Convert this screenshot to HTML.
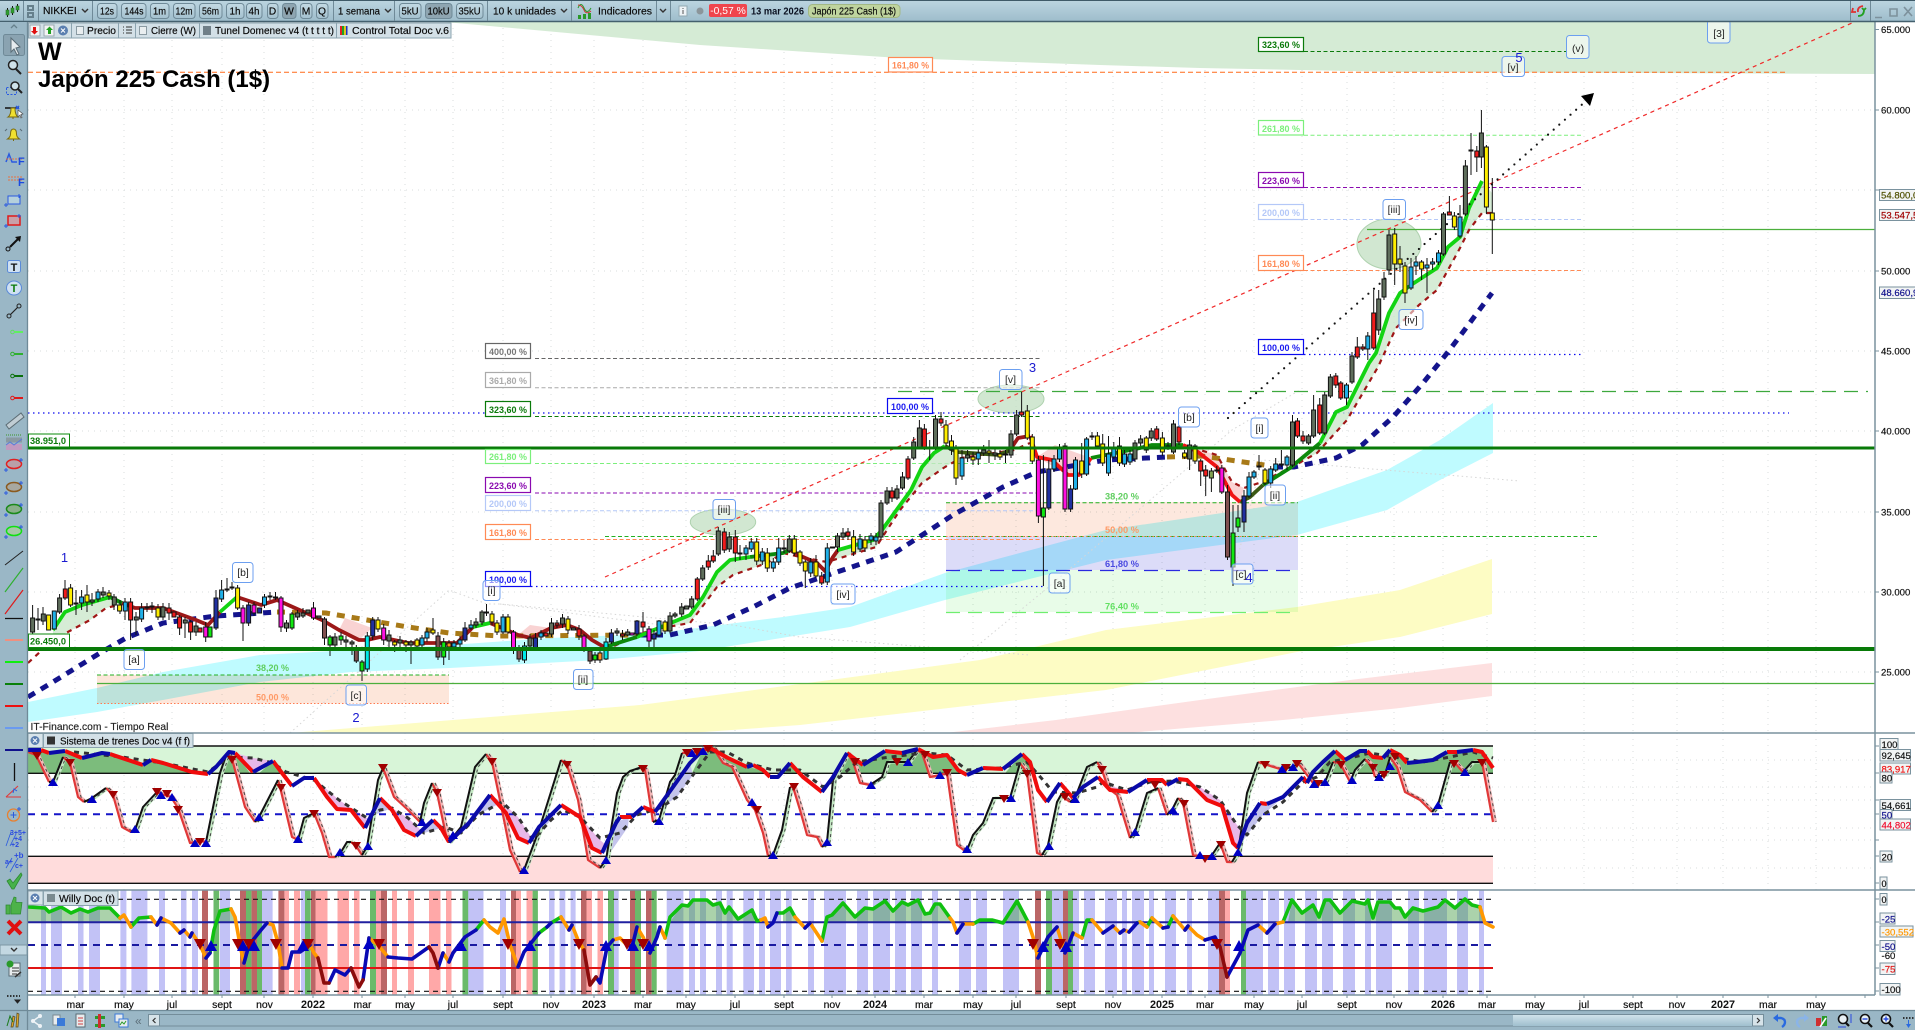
<!DOCTYPE html>
<html lang="es"><head><meta charset="utf-8"><title>Japón 225 Cash</title>
<style>
html,body{margin:0;padding:0;background:#fff;width:1915px;height:1030px;overflow:hidden}
svg{display:block;position:absolute;left:0;top:0}
text{font-family:"Liberation Sans",sans-serif}
.t{font-size:10.3px;fill:#0a0a0a;stroke:#0a0a0a;stroke-width:.18}
.m{text-anchor:middle}
.a{font-size:9.6px;fill:#111;stroke:#111;stroke-width:.18}
.x{font-size:10.4px;fill:#111;text-anchor:middle;stroke:#111;stroke-width:.2}
.y{font-size:10.8px;font-weight:bold;fill:#111;text-anchor:middle}
.f{font-size:9.6px;font-weight:bold;text-anchor:middle}
.w{font-size:10.4px;fill:#222;text-anchor:middle}
.n{font-size:13px;fill:#1a1ad0;text-anchor:middle}
.wb{fill:#fff;fill-opacity:.55;stroke:#6c9ff0;stroke-width:1}
.bx{fill:#f2f4f4;stroke:#7a929e;stroke-width:1}
.c path{stroke:#111;stroke-width:1}
</style></head><body>
<svg width="1915" height="1030" viewBox="0 0 1915 1030" xmlns="http://www.w3.org/2000/svg">
<defs>
<linearGradient id="tb" x1="0" y1="0" x2="0" y2="1"><stop offset="0" stop-color="#bcd5e0"/><stop offset="1" stop-color="#9dbccb"/></linearGradient>
<linearGradient id="bt" x1="0" y1="0" x2="0" y2="1"><stop offset="0" stop-color="#c3dae4"/><stop offset="1" stop-color="#a4c1cf"/></linearGradient>
<linearGradient id="sb" x1="0" y1="0" x2="0" y2="1"><stop offset="0" stop-color="#cfe2ea"/><stop offset="1" stop-color="#a0bfce"/></linearGradient>
<path id="fr" d="M28 752L36 755L49 782M63 757L70 763L78 797L84 802M106 788L113 795L122 827L131 832M157 792L161 794L171 797L178 808L190 843L200 841L206 842M227 753L232 759L245 807L255 822M278 780L280 787L292 837L298 840M314 813L322 833L329 857L335 857M351 842L356 846L362 855M383 768L394 797L408 810L420 822M432 783L437 793L447 840M486 754L492 762L502 810L510 850L520 872M561 760L567 765L578 800L588 860L600 868M642 767L645 770L653 822M682 753L686 753L697 752L700 752M713 748L723 763L732 767L747 800L755 810L763 833L768 856M790 787L793 787L800 810L807 835L817 837L822 847M847 753L853 762L860 783L870 785M917 750L922 753L930 777L940 775L947 773L957 845L965 851M1020 763L1027 773L1037 853L1042 855M1062 793L1063 797L1070 802M1097 762L1102 770L1108 788L1117 795L1130 838M1158 788L1167 815M1178 798L1183 803L1193 855L1205 858M1220 843L1227 862L1232 862M1258 762L1267 765L1280 769M1298 763L1313 783L1318 783M1333 762L1340 763L1350 782M1365 759L1372 767L1375 777M1390 757L1397 767L1405 792L1420 800L1432 812M1450 762L1455 763L1463 772M1482 762L1493 822"/>
<path id="fb" d="M49 782L53 782L63 757M84 802L92 798L106 788M131 832L135 830L143 807L157 792M206 842L220 773L227 753M255 822L259 817L278 780M298 840L304 818L314 813M335 857L341 852L347 842L351 842M362 855L367 847L378 780L383 768M420 822L424 803L432 783M447 840L449 842L461 827L475 767L486 754M520 872L524 870L539 830L561 760M600 868L606 860L617 793L623 777L630 771L642 767M653 822L659 820L670 782L675 775L682 753M700 752L702 750L713 748M768 856L773 855L782 830L790 787M822 847L827 842L833 780L847 753M870 785L882 777L887 762L897 762L908 762L917 750M965 851L967 850L973 835L983 823L993 798L1003 798L1010 798L1020 763M1042 855L1048 845L1057 802L1062 793M1070 802L1075 798L1087 767L1097 762M1130 838L1135 832L1147 793L1158 788M1167 815L1173 808L1178 798M1205 858L1212 855L1220 843M1232 862L1238 852L1247 793L1258 762M1280 769L1293 767L1298 763M1318 783L1325 782L1333 762M1350 782L1355 770L1365 759M1375 777L1378 777L1385 775L1390 757M1432 812L1438 805L1450 762M1463 772L1472 762L1482 762"/>
</defs>
<rect width="1915" height="1030" fill="#fff"/>

<!-- grid -->
<path stroke="#d9dedd" stroke-dasharray="1 5" fill="none" d="M28 110H1875M28 190H1875M28 271H1875M28 351H1875M28 431H1875M28 512H1875M28 592H1875M28 672H1875M28 760H1875M28 787H1875M28 800H1875M28 828H1875M28 840H1875M28 868H1875M28 911H1875M28 935H1875M28 956H1875M28 980H1875M75 22V995M124 22V995M172 22V995M222 22V995M264 22V995M313 22V995M362 22V995M405 22V995M453 22V995M503 22V995M551 22V995M594 22V995M643 22V995M686 22V995M735 22V995M784 22V995M832 22V995M875 22V995M924 22V995M973 22V995M1016 22V995M1066 22V995M1113 22V995M1162 22V995M1205 22V995M1254 22V995M1302 22V995M1347 22V995M1394 22V995M1443 22V995M1487 22V995M1535 22V995M1584 22V995M1633 22V995M1677 22V995M1723 22V995M1768 22V995M1816 22V995"/>

<!-- bands -->
<path fill="#d5ebd5" d="M445 22L700 45L900 58L1100 65L1200 68L1400 72L1875 74V22Z"/>
<path fill="#fde0e0" d="M945 733L1056 720L1200 700L1350 680L1492 663V696L1400 708L1283 720L1127 733Z"/>
<path fill="#fdfcc4" d="M290 733L640 705L800 684L980 660L1106 630L1297 607L1400 590L1492 559V614L1400 637L1297 652L1106 690L800 725L690 733Z"/>
<path fill="#bffbff" d="M28 702L97 688L163 672L260 655L351 650L450 645L550 638L650 634L783 617L850 607L945 573L1106 530L1297 502L1387 470L1440 440L1493 403V453L1440 480L1387 510L1297 535L1106 560L945 600L850 627L700 651L600 660L450 668L351 672L260 682L163 700L97 712L28 722Z"/>
<g style="mix-blend-mode:multiply">
<rect x="946" y="502" width="352" height="34.500" fill="#fde8de"/>
<rect x="946" y="536.500" width="352" height="33.500" fill="#dcdcf8"/>
<rect x="946" y="570" width="352" height="42" fill="#e8fce8"/>
<rect x="97" y="675" width="352" height="28.500" fill="#fde6da"/>
</g>

<!-- faint wave lines -->
<path fill="none" stroke="#d6d6d6" stroke-dasharray="1.500 3" d="M290 733L449 590L487 604L500 604L733 625L800 637L1030 655M960 660L1045 590L1232 430L1300 390M1232 580L1262 460L1520 481M500 604L700 630"/>

<!-- ellipses -->
<ellipse cx="723" cy="522" rx="32.700" ry="13" fill="#c2dfc2" fill-opacity=".75" stroke="#afd2af"/>
<ellipse cx="1011" cy="399" rx="33" ry="14" fill="#c2dfc2" fill-opacity=".75" stroke="#afd2af"/>
<ellipse cx="1389" cy="244" rx="32" ry="25" fill="#c2dfc2" fill-opacity=".75" stroke="#afd2af"/>

<!-- horizontal fib lines -->
<g fill="none">
<path stroke="#ff6a1a" stroke-dasharray="5 3" d="M28 72.300H1788"/>
<path stroke="#0a0af0" stroke-width="1.200" stroke-dasharray="1.500 3.500" d="M28 413H1789M531 586.500H1044M1304 354.500H1584"/>
<path stroke="#4caf3c" stroke-width="1.200" d="M97 683.500H1875M1367 229.500H1875"/>
<path stroke="#3da83d" stroke-width="1.200" stroke-dasharray="14 8" d="M898 391.500H1868"/>
<path stroke="#666" stroke-dasharray="4 2.500" d="M535 358.500H1042"/>
<path stroke="#aaa" stroke-dasharray="4 2.500" d="M535 387.700H1042"/>
<path stroke="#0a7a0a" stroke-dasharray="4 2.500" d="M535 416.500H1042M1304 51.500H1567"/>
<path stroke="#7bef7b" stroke-dasharray="4 2.500" d="M535 463.500H1042M1304 135.300H1583"/>
<path stroke="#8a0ab0" stroke-dasharray="4 2.500" d="M535 493H1042M1304 187.500H1583"/>
<path stroke="#b4c8f8" stroke-dasharray="4 2.500" d="M535 510.700H1042M1304 219.500H1583"/>
<path stroke="#ff8a55" stroke-dasharray="4 2.500" d="M535 539.500H1042M1304 270.500H1583"/>
<path stroke="#22b022" stroke-dasharray="4 2.500" d="M605 536.500H1598M946 502.700H1298M97 675H449"/>
<path stroke="#ff7a50" stroke-dasharray="1.500 2" d="M946 536.500H1298M97 703.500H449"/>
<path stroke="#2a2ae0" stroke-width="1.200" stroke-dasharray="14 8" d="M946 570.500H1298"/>
<path stroke="#6fee6f" stroke-width="1.200" stroke-dasharray="14 8" d="M946 612.500H1298"/>
<path stroke="#f02a2a" stroke-width="1.200" stroke-dasharray="4 4" d="M605 577L1852 23"/>
</g>

<!-- moving average fills -->
<path fill="#c8e6c8" fill-opacity=".75" d="M53 630L65 612L82 605L110 597L122 603L127 603L106 608L90 620L53 640ZM637 637L690 615L703 597L717 572L730 560L783 553L767 563L733 575L717 587L690 623L650 630ZM823 568L838 550L873 540L882 530L911 490L922 467L934 453L945 446L957 452L961 458L945 467L922 483L900 510L876 547L827 562ZM1290 468L1320 443L1336 412L1347 407L1369 363L1376 353L1389 313L1400 293L1414 283L1437 268L1448 247L1460 237L1469 208L1482 181L1492 193V213H1482L1469 230L1460 248L1437 290L1419 305L1396 328L1378 367L1347 420L1317 453Z"/>
<path fill="#f8c8c8" fill-opacity=".8" d="M1198 452L1217 467L1232 495L1240 502L1244 488L1232 482L1217 455L1183 445ZM1037 457L1068 475L1079 475L1091 458L1055 445ZM339 630L359 640L372 628L345 618ZM518 635L531 638L551 628L530 625Z"/>

<!-- long MA -->
<g fill="none" stroke-width="5">
<path stroke="#14148c" stroke-dasharray="8 7" d="M28 697L53 682L100 653L126 638L163 623L216 616L277 612M640 635L670 635L713 625L753 607L790 588L843 570L896 552L953 515L1003 487L1037 472L1106 460L1167 457M1275 467L1294 467L1336 458L1362 445L1393 417L1423 383L1448 352L1466 328L1483 305L1492 293"/>
<path stroke="#a87a18" stroke-dasharray="8 7" d="M277 612L326 613L408 627L449 633L500 636L640 635M1167 457L1202 456L1271 466"/>
</g>
<!-- thin dashed MA -->
<path fill="none" stroke="#a01616" stroke-width="2.200" stroke-dasharray="5 5" d="M28 663L53 640L90 620L106 608L127 603M605 650L650 630L690 623L717 587L733 575L767 563L783 553L800 557L827 562L876 547L900 510L922 483L945 467L961 458L1014 450L1030 443M1183 445L1217 455L1232 482L1244 488L1259 483L1290 468L1317 453L1347 420L1378 367L1396 328L1419 305L1437 290L1460 248L1469 230L1482 213L1492 213"/>
<!-- thick MA -->
<g fill="none" stroke-width="3.800" stroke-linejoin="round">
<path stroke="#0c8a0c" d="M110 597L122 603M605 647L637 637M750 557L783 553L790 550M1263 485L1290 468L1320 443M1091 458L1140 448L1152 445L1183 445"/>
<path stroke="#3c5a14" d="M945 446L957 452L999 455L1010 450M1240 502L1250 497L1263 485"/>
<path stroke="#9c1818" d="M122 603L135 608L163 608L196 620L208 625L220 612M237 597L261 605L277 600L322 620L339 630L359 640L367 640L380 637L408 643L433 643L457 643L473 627M490 623L502 628L518 635L531 638L551 628L567 625L580 630L592 640L604 647M790 550L803 557L817 563L825 571L833 557L838 550M1010 450L1018 438L1030 436"/>
<path stroke="#f01414" d="M1030 436L1037 457L1052 460L1068 475L1079 475L1091 458M1183 445L1198 452L1217 467L1232 495L1240 502"/>
<path stroke="#12d412" d="M53 630L65 612L82 605L110 597M220 612L237 597M473 627L490 623M637 637L690 615L703 597L717 572L730 560L750 557M838 550L873 540L882 530L911 490L922 467L934 453L945 446M1320 443L1336 412L1347 407L1369 363L1376 353L1389 313L1400 293L1414 283L1437 268L1448 247L1460 237L1469 208L1482 181"/>
</g>

<!-- dotted arrow -->
<path fill="none" stroke="#111" stroke-width="2.200" stroke-linecap="round" stroke-dasharray="0 7.500" d="M1228 418L1586 101"/>
<path fill="#000" d="M1594 93L1581 96L1590 106Z"/>

<!-- wicks -->
<path fill="none" stroke="#111" stroke-width="1" d="M32.600 605V637M38 608V630M43 607V625M59.600 594V614M65 580V600M70.600 584V607M76 590V615M81.600 590V610M87 585V612M92 593V606M98 589V602M103 587V598M109 590V600M114 594V610M120 600V614M125 598V620M130.600 598V640M136 612V635M141.600 603V622M147 603V612M152 602V613M158 604V620M163 603V620M169 603V620M179.600 615V635M185 617V638M190.600 620V640M196 622V636M205.700 622V642M216 590V630M221.600 580V602M227 578V592M232 582V590M237.600 585V610M243 605V641M248.600 602V626M254 602V616M264.500 594V608M270 592V600M275.500 592V600M281 596V632M286.500 620V632M292 612V630M297.600 610V620M303 608V618M313.500 602V620M324.500 617V645M330 635V656M335 633V648M341 632V645M346 636V650M352 640V655M356.300 645V663M362 660V681M367.300 632V672M372.700 617V640M378 617V632M383.700 624V645M389 630V647M394.700 640V652M400 636V650M406 640V652M411 640V664M417 638V650M422 635V648M427 628V642M433 618V635M438 632V660M443.700 638V665M449 640V660M454 640V650M460 636V648M465 622V642M471 620V630M476 618V628M482 610V625M486.500 604V616M492 611V625M497 620V635M503 614V634M508 614V634M513.500 630V654M519 645V662M524.500 642V663M530 634V648M535.500 633V650M541 630V640M551.500 618V637M557 620V628M562.500 614V628M568 616V634M579 625V640M584 634V652M590 650V664M595 652V663M600 650V663M606 638V660M611.400 629V644M617 628V636M622.500 630V640M627.700 629V636M637 620V636M643 612V632M649 626V648M654 630V647M659 620V637M665 620V634M670 612V633M675 612V618M681.700 603V617M691.700 596V609M697.300 577V601M702.700 565V581M708.300 555V570M713.300 550V563M718.300 527V556M724.300 528V553M729.300 532V552M735.300 530V562M740 545V560M746 545V560M751.300 538V552M756.700 538V565M762.300 548V565M767.300 548V572M773.300 558V572M778.700 538V565M784 540V553M789.300 535V553M794.300 535V556M800 550V566M805.300 560V588M810.700 558V577M816 555V578M821.700 572V585M827.300 543V585M837.500 533V552M843 528V540M848 528V540M853.600 530V556M860 534V552M865 536V552M871 533V545M876 533V545M881 500V540M887 487V505M892 487V502M897 485V500M902.500 472V490M908 456V480M913.700 437V460M919.400 420V449M924.400 424V450M929.700 440V460M935.500 415V450M941 412V426M946 420V446M951.500 435V455M956 445V485M962 450V480M967.600 450V462M973 452V465M978.300 449V465M983.700 445V456M989 440V463M995 449V460M1000 450V460M1005.500 450V463M1011 430V458M1016.600 410V436M1021.600 392V417M1027.300 405V440M1032.300 434V464M1038.400 456V523M1043.400 455V586M1048.800 460V510M1054 455V472M1059.500 444V462M1065 443V512M1070.600 485V512M1075.500 457V490M1081.700 443V478M1086.600 437V476M1092 432V440M1097.400 432V448M1102.700 434V466M1108.500 436V476M1113.800 442V459M1119.500 437V466M1124.500 450V467M1130 450V465M1135 440V462M1140.600 435V446M1146.300 436V453M1151.300 428V441M1156.700 426V441M1162.400 432V456M1168 442V450M1173.500 420V454M1179 425V445M1184.600 450V459M1189.600 440V470M1195 444V464M1200.700 459V486M1205.700 465V496M1211.400 468V492M1216.800 466V473M1221.800 465V494M1227.500 485V560M1233 505V586M1238 505V532M1244 490V532M1249 472V498M1254 470V479M1259 455V470M1265 468V485M1270.700 466V488M1275.700 458V472M1281.400 450V467M1287 455V470M1292.500 415V467M1297.500 418V438M1303 431V444M1308.600 434V445M1313.600 395V438M1319.700 398V435M1324.700 392V435M1330.400 374V398M1335.800 373V388M1340.800 381V400M1346.500 383V405M1352 352V384M1357.300 337V359M1362.800 344V351M1367.800 332V360M1373.700 290V350M1378.700 290V335M1384 272V300M1389 230V275M1394.700 228V285M1400 246V272M1405 262V303M1411 258V290M1416 256V275M1421.600 260V280M1427 258V293M1432.600 258V270M1438.500 250V265M1443.500 212V256M1449.400 196V215M1454.400 212V230M1460 205V238M1465.400 160V216M1471 133V175M1476.800 146V172M1481.400 110V168M1486.400 145V214M1492.300 178V254"/>

<!-- candle bodies -->
<g class="c">
<path fill="#5f6e5c" d="M30.600 618h4v14h-4zM36 619h4v1h-4zM41.300 614h4v7h-4zM57.600 598h4v14h-4zM74 603h4v1h-4zM90.200 600h4v2h-4zM101.300 592h4v3h-4zM112.300 597h4v8h-4zM134.300 617h4v3h-4zM145 607h4v1h-4zM150 606h4v1h-4zM161 607h4v10h-4zM183.300 620h4v3h-4zM194 626h4v6h-4zM225 589h4v1h-4zM230 587h4v1h-4zM268 596h4v1h-4zM284.500 623h4v5h-4zM295.600 613h4v4h-4zM301 613h4v3h-4zM306 610h4v3h-4zM317 616h4v2h-4zM333 637h4v8h-4zM344 640h4v2h-4zM350 642h4v2h-4zM387 635h4v6h-4zM398 640h4v3h-4zM409 642h4v3h-4zM474 622h4v3h-4zM480 612h4v10h-4zM484.500 612h4v1h-4zM528 638h4v8h-4zM549.500 623h4v11h-4zM560.500 618h4v6h-4zM571.500 628h4v2h-4zM615 631h4v2h-4zM625.700 632h4v3h-4zM668 616h4v15h-4zM673 614h4v2h-4zM679.700 607h4v7h-4zM684.700 606h4v3h-4zM689.700 599h4v8h-4zM700.700 568h4v11h-4zM716.300 531h4v23h-4zM727.300 537h4v12h-4zM738 553h4v1h-4zM782 548h4v1h-4zM787.300 539h4v12h-4zM830.500 547h4v1h-4zM835.500 536h4v11h-4zM841 533h4v4h-4zM879 503h4v34h-4zM885 491h4v12h-4zM895 489h4v9h-4zM900.500 477h4v11h-4zM911.700 442h4v16h-4zM917.400 428h4v19h-4zM933.500 419h4v29h-4zM965.600 455h4v3h-4zM981.700 450h4v3h-4zM993 453h4v2h-4zM1003.500 454h4v1h-4zM1009 434h4v21h-4zM1014.600 415h4v19h-4zM1133 443h4v16h-4zM1138.600 439h4v4h-4zM1149.300 431h4v7h-4zM1166 446h4v1h-4zM1171.500 424h4v28h-4zM1187.600 445h4v14h-4zM1214.800 470h4v1h-4zM1279.400 464h4v1h-4zM1290.500 422h4v43h-4zM1306.600 436h4v7h-4zM1311.600 410h4v26h-4zM1322.700 395h4v38h-4zM1328.400 377h4v19h-4zM1350 356h4v26h-4zM1376.700 299h4v31h-4zM1382 279h4v18h-4zM1387 235h4v35h-4zM1441.500 214h4v40h-4zM1463.400 166h4v48h-4zM1469 150h4v1h-4zM1479.400 133h4v24h-4z"/>
<path fill="#ffee00" d="M46.600 615h4v15h-4zM68.600 588h4v17h-4zM85 595h4v7h-4zM107 593h4v3h-4zM117.600 605h4v6h-4zM156 608h4v9h-4zM235.600 588h4v20h-4zM273.500 597h4v1h-4zM376 620h4v9h-4zM392.700 642h4v3h-4zM404 642h4v3h-4zM415 640h4v6h-4zM431 630h4v3h-4zM490 614h4v8h-4zM495 623h4v9h-4zM506 617h4v15h-4zM566 619h4v11h-4zM663 622h4v9h-4zM754.700 542h4v19h-4zM765.300 553h4v15h-4zM792.300 539h4v14h-4zM798 552h4v11h-4zM803.300 562h4v9h-4zM814 562h4v14h-4zM851.600 537h4v15h-4zM863 540h4v8h-4zM927.700 447h4v2h-4zM944 425h4v18h-4zM949.500 441h4v9h-4zM954 449h4v29h-4zM971 457h4v3h-4zM987 451h4v2h-4zM998 454h4v3h-4zM1025.300 411h4v27h-4zM1030.300 437h4v24h-4zM1079.700 461h4v13h-4zM1090 436h4v1h-4zM1095.400 436h4v10h-4zM1100.700 444h4v19h-4zM1117.500 446h4v17h-4zM1144.300 438h4v12h-4zM1160.400 438h4v14h-4zM1182.600 453h4v4h-4zM1193 446h4v15h-4zM1263 470h4v13h-4zM1392.700 234h4v30h-4zM1398 259h4v5h-4zM1403 266h4v27h-4zM1419.600 262h4v7h-4zM1452.400 216h4v11h-4zM1484.400 147h4v60h-4zM1490.300 213h4v7h-4z"/>
<path fill="#20b0e8" d="M52.300 611h4v18h-4zM79.600 597h4v6h-4zM96 592h4v7h-4zM123.300 602h4v9h-4zM139.600 608h4v11h-4zM219.600 590h4v9h-4zM262.500 597h4v8h-4zM420 638h4v7h-4zM425 632h4v6h-4zM452 643h4v4h-4zM458 640h4v4h-4zM469 625h4v3h-4zM501 617h4v15h-4zM539 633h4v4h-4zM657 621h4v14h-4zM744 548h4v6h-4zM749.300 542h4v7h-4zM760.300 552h4v9h-4zM771.300 562h4v6h-4zM776.700 548h4v14h-4zM808.700 562h4v11h-4zM825.300 548h4v34h-4zM858 539h4v10h-4zM869 536h4v4h-4zM874 537h4v4h-4zM960 458h4v18h-4zM976.300 453h4v6h-4zM1052 459h4v10h-4zM1057.500 447h4v12h-4zM1073.500 460h4v29h-4zM1084.600 439h4v35h-4zM1106.500 454h4v19h-4zM1111.800 447h4v10h-4zM1122.500 454h4v10h-4zM1128 454h4v8h-4zM1247 477h4v19h-4zM1252 472h4v5h-4zM1257 466h4v1h-4zM1268.700 469h4v14h-4zM1273.700 464h4v6h-4zM1285 457h4v8h-4zM1344.500 385h4v13h-4zM1365.800 336h4v13h-4zM1409 267h4v21h-4zM1414 262h4v4h-4zM1425 265h4v3h-4zM1430.600 262h4v2h-4zM1436.500 253h4v9h-4zM1458 217h4v19h-4z"/>
<path fill="#f01c1c" d="M63.300 589h4v9h-4zM128.600 602h4v18h-4zM167 608h4v5h-4zM172 612h4v5h-4zM177.600 617h4v11h-4zM188.600 622h4v10h-4zM198 628h4v4h-4zM544 633h4v3h-4zM555 623h4v2h-4zM577 629h4v7h-4zM620.500 634h4v2h-4zM641 622h4v5h-4zM695.300 579h4v20h-4zM706.300 561h4v6h-4zM711.300 556h4v5h-4zM722.300 532h4v18h-4zM733.300 537h4v16h-4zM819.700 576h4v7h-4zM846 532h4v4h-4zM890 491h4v7h-4zM906 459h4v19h-4zM922.400 429h4v18h-4zM939 419h4v4h-4zM1019.600 412h4v3h-4zM1154.700 429h4v10h-4zM1177 427h4v15h-4zM1198.700 461h4v10h-4zM1203.700 470h4v6h-4zM1295.500 421h4v15h-4zM1301 436h4v5h-4zM1317.700 405h4v28h-4zM1333.800 376h4v9h-4zM1338.800 383h4v15h-4zM1355.300 347h4v10h-4zM1360.800 347h4v2h-4zM1371.700 313h4v35h-4zM1447.400 212h4v3h-4zM1474.800 151h4v6h-4z"/>
<path fill="#2030a0" d="M214 598h4v30h-4zM246.600 605h4v18h-4zM257.600 608h4v5h-4zM370.700 620h4v16h-4zM463 628h4v12h-4zM533.500 638h4v10h-4zM609.400 633h4v9h-4zM635 621h4v13h-4zM652 634h4v5h-4zM1046.800 469h4v39h-4zM1068.600 489h4v20h-4zM1242 496h4v26h-4z"/>
<path fill="#ff10e0" d="M203.700 627h4v10h-4zM241 608h4v15h-4zM252 605h4v8h-4zM279 598h4v29h-4zM311.500 608h4v10h-4zM381.700 628h4v12h-4zM511.500 632h4v18h-4zM582 636h4v14h-4zM630 633h4v2h-4zM647 629h4v12h-4zM1036.400 460h4v56h-4zM1063 446h4v63h-4zM1219.800 468h4v24h-4z"/>
<path fill="#10e810" d="M208 627h4v10h-4zM290 614h4v14h-4zM328 637h4v8h-4zM339 636h4v4h-4zM360 662h4v9h-4zM441.700 642h4v15h-4zM593 655h4v5h-4zM1041.400 508h4v9h-4zM1231 533h4v34h-4zM1236 518h4v9h-4z"/>
<path fill="#805050" d="M322.500 619h4v19h-4zM354.300 650h4v11h-4zM436 636h4v21h-4zM517 649h4v10h-4zM588 651h4v10h-4zM1225.500 492h4v65h-4z"/>
<path fill="#00e8e8" d="M365.300 636h4v33h-4zM522.500 646h4v14h-4zM604 642h4v17h-4z"/>
<path fill="#ff9020" d="M447 643h4v4h-4zM598 653h4v7h-4z"/>
<path fill="#7fa050" d="M1209.400 471h4v7h-4z"/>
</g>

<!-- thick horizontals on top -->
<path fill="none" stroke="#087a08" stroke-width="3" d="M28 448H1875"/>
<path fill="none" stroke="#087a08" stroke-width="4" d="M28 649H1875"/>

<!-- Value boxes for lines -->
<rect x="28.500" y="634" width="41" height="13.500" fill="#fff" stroke="#0a8a0a"/><text x="30" y="644.500" class="f" style="text-anchor:start;fill:#0a7a0a" textLength="36" lengthAdjust="spacingAndGlyphs">26.450,0</text>
<rect x="28.500" y="434" width="41" height="13" fill="#fff" stroke="#0a8a0a"/><text x="30" y="444" class="f" style="text-anchor:start;fill:#0a7a0a" textLength="36" lengthAdjust="spacingAndGlyphs">38.951,0</text>

<!-- fib label boxes -->
<g fill="#fff" stroke-width="1.200">
<rect x="485.500" y="343.500" width="45" height="15" stroke="#666"/>
<rect x="485.500" y="372.500" width="45" height="15" stroke="#aaa"/>
<rect x="485.500" y="401.500" width="45" height="15" stroke="#0a7a0a"/>
<rect x="485.500" y="449.500" width="45" height="14" stroke="#7bef7b"/>
<rect x="485.500" y="477.500" width="45" height="15" stroke="#8a0ab0"/>
<rect x="485.500" y="495.500" width="45" height="15" stroke="#b4c8f8"/>
<rect x="485.500" y="524.500" width="45" height="15" stroke="#ff8a55"/>
<rect x="485.500" y="571.500" width="45" height="15" stroke="#0a0af0"/>
<rect x="1258.500" y="37.500" width="45" height="14" stroke="#0a7a0a"/>
<rect x="1258.500" y="120.500" width="45" height="14.500" stroke="#7bef7b"/>
<rect x="1258.500" y="172.500" width="45" height="15" stroke="#8a0ab0"/>
<rect x="1258.500" y="204.500" width="45" height="15" stroke="#b4c8f8"/>
<rect x="1258.500" y="255.500" width="45" height="15" stroke="#ff8a55"/>
<rect x="1258.500" y="339.500" width="45" height="15" stroke="#0a0af0"/>
<rect x="888.500" y="57.500" width="44" height="14.500" stroke="#ff8a55"/>
<rect x="887.500" y="398.500" width="45" height="15" stroke="#0a0af0"/>
</g>
<g class="labels">
<text x="508" y="355" class="f" fill="#777" textLength="38" lengthAdjust="spacingAndGlyphs">400,00 %</text>
<text x="508" y="384" class="f" fill="#aaa" textLength="38" lengthAdjust="spacingAndGlyphs">361,80 %</text>
<text x="508" y="413" class="f" fill="#0a7a0a" textLength="38" lengthAdjust="spacingAndGlyphs">323,60 %</text>
<text x="508" y="460" class="f" fill="#7bef7b" textLength="38" lengthAdjust="spacingAndGlyphs">261,80 %</text>
<text x="508" y="489" class="f" fill="#8a0ab0" textLength="38" lengthAdjust="spacingAndGlyphs">223,60 %</text>
<text x="508" y="507" class="f" fill="#b4c8f8" textLength="38" lengthAdjust="spacingAndGlyphs">200,00 %</text>
<text x="508" y="536" class="f" fill="#ff8a55" textLength="38" lengthAdjust="spacingAndGlyphs">161,80 %</text>
<text x="508" y="583" class="f" fill="#1a1af0" textLength="38" lengthAdjust="spacingAndGlyphs">100,00 %</text>
<text x="1281" y="48" class="f" fill="#0a7a0a" textLength="38" lengthAdjust="spacingAndGlyphs">323,60 %</text>
<text x="1281" y="132" class="f" fill="#7bef7b" textLength="38" lengthAdjust="spacingAndGlyphs">261,80 %</text>
<text x="1281" y="184" class="f" fill="#8a0ab0" textLength="38" lengthAdjust="spacingAndGlyphs">223,60 %</text>
<text x="1281" y="216" class="f" fill="#b4c8f8" textLength="38" lengthAdjust="spacingAndGlyphs">200,00 %</text>
<text x="1281" y="267" class="f" fill="#ff8a55" textLength="38" lengthAdjust="spacingAndGlyphs">161,80 %</text>
<text x="1281" y="351" class="f" fill="#1a1af0" textLength="38" lengthAdjust="spacingAndGlyphs">100,00 %</text>
<text x="910.500" y="68.500" class="f" fill="#ff8a55" textLength="37" lengthAdjust="spacingAndGlyphs">161,80 %</text>
<text x="910" y="410" class="f" fill="#1a1af0" textLength="38" lengthAdjust="spacingAndGlyphs">100,00 %</text>
<text x="1122" y="499.500" class="f" fill="#5fce5f" textLength="34" lengthAdjust="spacingAndGlyphs">38,20 %</text>
<text x="1122" y="533" class="f" fill="#ff9a66" textLength="34" lengthAdjust="spacingAndGlyphs">50,00 %</text>
<text x="1122" y="567" class="f" fill="#4a4ae0" textLength="34" lengthAdjust="spacingAndGlyphs">61,80 %</text>
<text x="1122" y="609.500" class="f" fill="#62e062" textLength="34" lengthAdjust="spacingAndGlyphs">76,40 %</text>
<text x="272.500" y="671" class="f" fill="#5fce5f" textLength="33" lengthAdjust="spacingAndGlyphs">38,20 %</text>
<text x="272.500" y="700.500" class="f" fill="#ff9a66" textLength="33" lengthAdjust="spacingAndGlyphs">50,00 %</text>
</g>

<!-- wave labels -->
<rect class="wb" x="232.500" y="562.500" width="20.500" height="20" rx="3"/><text x="243" y="576" class="w">[b]</text>
<rect class="wb" x="124" y="649.500" width="20.500" height="20" rx="3"/><text x="134" y="663" class="w">[a]</text>
<rect class="wb" x="346" y="685" width="20.500" height="20" rx="3"/><text x="356" y="699" class="w">[c]</text>
<rect class="wb" x="483" y="580.500" width="17" height="20" rx="3"/><text x="491.500" y="594" class="w">[i]</text>
<rect class="wb" x="573.500" y="669.500" width="19.500" height="20" rx="3"/><text x="583" y="683" class="w">[ii]</text>
<rect class="wb" x="713" y="499.500" width="22.500" height="20" rx="3"/><text x="724" y="513" class="w">[iii]</text>
<rect class="wb" x="831" y="584" width="24" height="20" rx="3"/><text x="843" y="598" class="w">[iv]</text>
<rect class="wb" x="999.500" y="369.500" width="22.500" height="20" rx="3"/><text x="1010.500" y="383" class="w">[v]</text>
<rect class="wb" x="1049" y="573" width="21" height="20" rx="3"/><text x="1059.500" y="587" class="w">[a]</text>
<rect class="wb" x="1178.500" y="407" width="21" height="20" rx="3"/><text x="1189" y="421" class="w">[b]</text>
<rect class="wb" x="1251" y="418" width="17" height="20" rx="3"/><text x="1259.500" y="432" class="w">[i]</text>
<rect class="wb" x="1265" y="485" width="20.500" height="20" rx="3"/><text x="1275" y="499" class="w">[ii]</text>
<rect class="wb" x="1232" y="564" width="21" height="20" rx="3"/><text x="1241" y="578" class="w">[c]</text>
<rect class="wb" x="1383" y="199.500" width="22.500" height="20" rx="3"/><text x="1394" y="213" class="w">[iii]</text>
<rect class="wb" x="1399" y="309.500" width="24" height="20" rx="3"/><text x="1411" y="323.500" class="w">[iv]</text>
<rect class="wb" x="1502" y="56.500" width="22.500" height="20" rx="3"/><text x="1513" y="71" class="w">[v]</text>
<rect class="wb" x="1566.500" y="35.500" width="22.500" height="23" rx="3"/><text x="1578" y="52" class="w">(v)</text>
<rect class="wb" x="1707.500" y="20" width="22.500" height="23" rx="3"/><text x="1719" y="37" class="w">[3]</text>
<text x="64.500" y="562" class="n">1</text><text x="356" y="722" class="n">2</text><text x="1032.500" y="372" class="n">3</text><text x="1249" y="582" class="n">4</text><text x="1519" y="62" class="n">5</text>

<!-- titles -->
<text x="38" y="60" style="font-size:25px;font-weight:bold" fill="#000">W</text>
<text x="38" y="87" style="font-size:24px;font-weight:bold" fill="#000">Japón 225 Cash (1$)</text>
<text x="30.500" y="730" style="font-size:10.300px" fill="#222" stroke="#222" stroke-width=".15">IT-Finance.com - Tiempo Real</text>

<!-- PANEL 2 -->
<rect x="28" y="733" width="1847" height="157" fill="#fff"/>
<path stroke="#d9dedd" stroke-dasharray="1 5" fill="none" d="M28 760H1875M28 787H1875M28 800H1875M28 828H1875M28 840H1875M28 868H1875M124 733V890M222 733V890M313 733V890M405 733V890M503 733V890M594 733V890M686 733V890M784 733V890M875 733V890M973 733V890M1066 733V890M1162 733V890M1254 733V890M1347 733V890M1443 733V890M1535 733V890M1584 733V890M1633 733V890M1677 733V890M1723 733V890M1768 733V890M1816 733V890"/>
<rect x="28" y="746" width="1465" height="27.500" fill="#d8f5d8"/>
<rect x="28" y="856.500" width="1465" height="27" fill="#ffdcdc"/>
<path fill="#7cbc7c" d="M28 773.300V750L49 753L65 751L82 758L102 753L110 754L143 765L151 760L163 763L192 772L200 773.300ZM222 773.300L229 752L235 753L250 773.300ZM259 773.300L273 761L282 773.300ZM692 773.300L703 750L710 748L728 758L747 767L763 770L770 773.300H803L790 763L778 773.300ZM803 773.300H833L847 753L863 765L885 751L902 753L918 749L933 757L947 755L958 770L965 773.300ZM1005 773.300L1022 754L1030 762L1035 773.300ZM1317 773.300L1335 751L1345 760L1360 751L1367 751L1373 757L1383 758L1390 750L1400 755L1407 763L1417 762L1433 760L1447 752L1457 752L1473 750L1482 752L1493 768V773.300Z"/>
<path fill="#e8b8e8" d="M314 778L327 797L337 809L351 810L365 828L367 818L339 800ZM380 798L392 810L404 830L416 836L424 833L408 818L392 808ZM490 795L506 813L518 838L529 843L533 840L518 817L502 802ZM561 805L580 817L592 848L602 853L612 850L600 840L580 817ZM235 753L253 772L273 761L253 758ZM1222 806L1233 843L1238 848L1247 835L1237 825L1220 800L1207 795ZM820 780L822 792L833 777L823 787ZM1187 780L1207 800L1222 806L1220 800L1200 787ZM1110 790L1128 792L1127 790L1105 785Z"/>
<path fill="#c4c4ec" d="M365 828L380 798L392 808L367 818ZM416 836L433 820L445 827L424 833ZM449 842L469 823L490 795L502 802L478 815L461 833ZM529 843L539 827L561 805L551 820L533 840ZM602 853L616 823L629 816L628 827L612 850ZM1238 848L1247 823L1260 803L1283 797L1263 815L1247 835ZM655 812L673 787L690 763L693 775L677 797L660 808Z"/>
<path fill="none" stroke="#111" stroke-width="1.400" d="M28 746H1493M28 773.300H1493M28 856.300H1493M28 883.300H1493"/>
<path fill="none" stroke="#1414c8" stroke-width="2" stroke-dasharray="7 6" d="M28 814.300H1493"/>
<g fill="none" stroke-linejoin="round">
<use href="#fr" transform="translate(2.500,0)" stroke="#f2b8b8" stroke-width="3"/>
<use href="#fb" transform="translate(2.500,0)" stroke="#c4e8c4" stroke-width="3"/>
<use href="#fr" transform="translate(3,0)" stroke="#444" stroke-width="1" stroke-dasharray="3 3"/>
<use href="#fb" transform="translate(3,0)" stroke="#444" stroke-width="1" stroke-dasharray="3 3"/>
<use href="#fr" stroke="#e03838" stroke-width="2.200"/>
<use href="#fb" stroke="#111" stroke-width="2"/>
<path stroke="#333" stroke-width="3" stroke-dasharray="5 5" d="M74 752L122 757L163 763L208 772L229 757L253 758L273 763L286 772L314 780L339 800L367 818L380 810L392 808L408 818L424 833L445 827L461 833L478 815L502 802L518 817L533 840L551 820L563 810L580 817L600 838L620 833L637 815L660 808L677 797L693 775L710 752L727 752L747 763L773 770L800 770L823 787L840 777L857 762L883 758L907 755L927 753L947 755L967 770L1000 768L1027 762L1043 780L1053 792L1077 793L1097 787L1103 782L1127 790L1150 782L1173 781L1200 787L1220 800L1237 825L1247 835L1263 815L1283 802L1303 782L1317 777L1330 762L1350 758L1370 753L1400 758L1423 762L1450 757L1473 752L1493 758"/>
<path stroke="#f00c0c" stroke-width="4" d="M41 750L49 753M65 751L82 758M110 754L143 765M151 760L163 763L192 772L208 774M235 753L253 772M273 761L282 773L292 786M314 778L327 797L337 809L351 810L365 828M380 798L392 810L404 830L416 836M433 820L441 828L449 842M490 795L506 813L518 838L529 843M561 805L580 817L592 848L602 853M620 817L632 817M643 807L655 812M703 750L710 748L728 758L747 767M753 765L763 770L770 777M790 763L803 777L822 792M847 753L863 765M885 751L902 753M918 749L933 757L947 755L958 770L967 775M983 768L1003 769M1022 754L1030 762L1038 790L1047 802M1060 783L1073 798M1098 777L1110 790L1128 792M1147 780L1162 780L1167 785M1178 779L1187 780L1207 800L1222 806L1233 843L1238 848M1260 803L1267 804M1303 777L1307 783M1335 751L1345 760M1367 751L1373 757L1383 758M1390 750L1400 755L1407 763M1447 752L1457 752M1473 750L1482 752L1493 768"/>
<path stroke="#0a0aa8" stroke-width="4" d="M28 750L41 750M49 753L65 751M82 758L102 753L110 754M143 765L151 760M208 774L216 767L229 752L235 753M253 772L273 761M292 786L304 778L314 778M365 828L380 798M416 836L433 820M449 842L469 823L490 795M529 843L539 827L561 805M602 853L616 823L620 817M632 817L643 807M655 812L673 787L690 763L703 750M747 767L753 765M770 777L778 777L790 763M822 792L833 777L847 753M863 765L885 751M902 753L918 749M967 775L983 768M1003 769L1022 754M1047 802L1060 783M1073 798L1083 787L1098 777M1128 792L1147 780M1167 785L1178 779M1238 848L1247 823L1260 803M1267 804L1283 797L1303 777M1307 783L1313 772L1323 762L1335 751M1345 760L1360 751L1367 751M1383 758L1390 750M1407 763L1417 762L1433 760L1447 752M1457 752L1473 750"/>
</g>
<path fill="#a00000" d="M32 752h10l-5 8zM65 759h10l-5 8zM108 791h10l-5 8zM152 788h10l-5 8zM162 790h10l-5 8zM173 806h10l-5 8zM195 838h10l-5 8zM227 756h10l-5 8zM276 784h10l-5 8zM309 810h10l-5 8zM351 842h10l-5 8zM378 764h10l-5 8zM432 789h10l-5 8zM487 758h10l-5 8zM562 761h10l-5 8zM638 765h10l-5 8zM682 749h10l-5 8zM692 748h10l-5 8zM703 745h10l-5 8zM752 806h10l-5 8zM789 783h10l-5 8zM850 758h10l-5 8zM892 758h10l-5 8zM920 751h10l-5 8zM942 769h10l-5 8zM999 795h10l-5 8zM1022 770h10l-5 8zM1060 793h10l-5 8zM1097 766h10l-5 8zM1150 781h10l-5 8zM1179 800h10l-5 8zM1200 855h10l-5 8zM1216 841h10l-5 8zM1260 761h10l-5 8zM1281 764h10l-5 8zM1292 760h10l-5 8zM1313 780h10l-5 8zM1336 761h10l-5 8zM1368 764h10l-5 8zM1379 771h10l-5 8zM1390 753h10l-5 8zM1449 760h10l-5 8zM1477 759h10l-5 8z"/>
<path fill="#0000c4" d="M48 786h10l-5-8zM87 803h10l-5-8zM130 833h10l-5-8zM156 799h10l-5-8zM167 801h10l-5-8zM190 847h10l-5-8zM201 847h10l-5-8zM254 821h10l-5-8zM293 843h10l-5-8zM335 856h10l-5-8zM363 850h10l-5-8zM417 826h10l-5-8zM448 839h10l-5-8zM519 874h10l-5-8zM601 864h10l-5-8zM654 825h10l-5-8zM687 757h10l-5-8zM698 755h10l-5-8zM747 806h10l-5-8zM768 859h10l-5-8zM822 846h10l-5-8zM866 789h10l-5-8zM903 766h10l-5-8zM935 779h10l-5-8zM962 853h10l-5-8zM1006 802h10l-5-8zM1044 850h10l-5-8zM1070 803h10l-5-8zM1130 836h10l-5-8zM1168 814h10l-5-8zM1195 859h10l-5-8zM1207 860h10l-5-8zM1233 856h10l-5-8zM1277 773h10l-5-8zM1288 771h10l-5-8zM1309 788h10l-5-8zM1320 786h10l-5-8zM1347 784h10l-5-8zM1374 781h10l-5-8zM1385 770h10l-5-8zM1433 809h10l-5-8zM1460 776h10l-5-8z"/>

<!-- PANEL 3 -->
<rect x="28" y="890" width="1847" height="105" fill="#fff"/>
<path fill="#c2c2f6" d="M41 890h5v105h-5zM51 890h11v105h-11zM78 890h5.500v105h-5.500zM89 890h11v105h-11zM120.400 890h6v105h-6zM131.400 890h16v105h-16zM159 890h6v105h-6zM181 890h5.500v105h-5.500zM192 890h6v105h-6zM220 890h10v105h-10zM262 890h10.600v105h-10.600zM301 890h4v105h-4zM468 890h15.500v105h-15.500zM500 890h6v105h-6zM549 890h5.500v105h-5.500zM559.600 890h5.700v105h-5.700zM570.600 890h5v105h-5zM614 890h4.700v105h-4.700zM666.700 890h16.700v105h-16.700zM689 890h6v105h-6zM700 890h6v105h-6zM716 890h6v105h-6zM726.700 890h6v105h-6zM743.300 890h10.700v105h-10.700zM759 890h6v105h-6zM770 890h11v105h-11zM786 890h5.700v105h-5.700zM808 890h6v105h-6zM824 890h22v105h-22zM857 890h11v105h-11zM873 890h17v105h-17zM895 890h11v105h-11zM911 890h11v105h-11zM932 890h6v105h-6zM959 890h12v105h-12zM976 890h11v105h-11zM1003 890h16v105h-16zM1052 890h11v105h-11zM1073 890h6v105h-6zM1084 890h11v105h-11zM1105 890h12v105h-12zM1122 890h5v105h-5zM1132 890h12v105h-12zM1149 890h5v105h-5zM1165 890h11v105h-11zM1187 890h5v105h-5zM1208 890h11v105h-11zM1246 890h17v105h-17zM1268 890h11v105h-11zM1284 890h11v105h-11zM1305 890h12v105h-12zM1322 890h11v105h-11zM1343 890h12v105h-12zM1365 890h6v105h-6zM1376 890h16v105h-16zM1408 890h11v105h-11zM1424 890h23v105h-23zM1457 890h11v105h-11zM1479 890h5v105h-5z"/>
<path fill="#ffa8a8" d="M284.500 890h4.500v105h-4.500zM294 890h6v105h-6zM315.500 890h12v105h-12zM337.500 890h11.500v105h-11.500zM354 890h5.500v105h-5.500zM376 890h5v105h-5zM392 890h5v105h-5zM408 890h6v105h-6zM429 890h11.500v105h-11.500zM446 890h5.500v105h-5.500zM516 890h5v105h-5zM526.500 890h6v105h-6zM586.500 890h5.500v105h-5.500zM597.500 890h5.500v105h-5.500zM1225 890h5v105h-5z"/>
<path fill="#bb6666" d="M202 890h6v105h-6zM240 890h6v105h-6zM251.400 890h6v105h-6zM278.400 890h6v105h-6zM311 890h4.500v105h-4.500zM381 890h6v105h-6zM511 890h5v105h-5zM581 890h5.500v105h-5.500zM630 890h5v105h-5zM646 890h5.700v105h-5.700zM1035 890h6v105h-6zM1063 890h5v105h-5zM1219 890h6v105h-6z"/>
<path fill="#6aba6a" d="M213.500 890h5.700v105h-5.700zM246 890h5.400v105h-5.400zM257 890h5v105h-5zM305 890h5.700v105h-5.700zM370 890h6v105h-6zM462.500 890h5.700v105h-5.700zM532.600 890h5.300v105h-5.300zM608 890h6v105h-6zM635 890h6v105h-6zM651.700 890h5v105h-5zM1046 890h6v105h-6zM1068 890h5v105h-5zM1241 890h5v105h-5z"/>
<path fill="#449c44" fill-opacity=".45" d="M28 922V907L45 908L49 912L61 907L71 913L80 909L88 912L98 908L110 908L120 918L122 922ZM214 922L220 911L231 909L235 917L237 922ZM670 922L682 905L688 906L693 900L707 900L713 905L720 903L725 913L729 907L738 919L752 910L757 921V922ZM783 922V913L790 908L795 917L798 922ZM827 922V917L832 915L843 903L855 917L865 908L873 909L885 901L893 911L902 902L908 905L918 900L925 914L930 913L935 904L940 904L950 918L953 922ZM1003 922L1017 901L1028 922ZM1288 922L1292 900L1302 913L1313 905L1319 917L1325 900L1330 900L1340 913L1352 901L1365 904L1368 900L1373 918L1378 902L1390 902L1395 908L1400 908L1405 917L1413 908L1423 911L1438 907L1445 900L1455 908L1465 899L1472 905L1480 907L1485 922Z"/>
<path fill="none" stroke="#111" stroke-width="1.200" stroke-dasharray="5 4" d="M28 899.300H1493M28 991.300H1493"/>
<path fill="none" stroke="#2020a0" stroke-width="2" d="M28 922.300H1493"/>
<path fill="none" stroke="#1a1aa0" stroke-width="2" stroke-dasharray="7 6" d="M28 945H1493"/>
<path fill="none" stroke="#e01414" stroke-width="2" d="M28 968H1493"/>
<g fill="none" stroke-width="3.600" stroke-linejoin="round" stroke-linecap="round">
<path stroke="#10c010" d="M28.600 907L45 908L49 912L61 907L71 913L80 909L88 912L98 908L110 908L120 918M131 927L139 918L151 917M210 953L214 930L220 911L231 909M476 930L484 920M539 933L547 927M551 923L561 917M665 938L670 917L682 905L688 906L693 900L707 900L713 905L720 903L725 913L729 907L738 919L752 910L757 921L761 920M777 913L783 913L790 908L795 917M822 941L827 917L832 915L843 903L855 917L865 908L873 909L885 901L893 911L902 902L908 905L918 900L925 914L930 913L935 904L940 904L950 918M973 924L980 920L992 920L1003 923L1017 901L1028 922M1082 938L1087 920L1092 920M1137 923L1140 922M1147 927L1152 918M1168 927L1173 916M1283 922L1292 900L1302 913L1313 905L1319 917L1325 900L1330 900L1340 913L1352 901L1365 904L1368 900L1373 918L1378 902L1390 902L1395 908L1400 908L1405 917L1413 908L1423 911L1438 907L1445 900L1455 908L1465 899L1472 905L1480 907"/>
<path stroke="#ff9800" d="M120 918L124 915L131 927M151 917L157 925M161 918L171 923L180 933M184 930L190 937M192 933L200 945L206 958M231 909L235 917L241 950L244 963M267 923L273 925L278 943L282 968M310 945L314 953L318 958M369 938L378 945L388 957M443 953L449 962M484 920L490 927L498 933L504 919L510 945L518 967M561 917L569 930M572 925L578 940L584 950M613 940L620 938L627 945M637 927L643 937L650 953M660 927L665 938M761 920L765 918L768 927M795 917L805 928M810 923L822 941M950 918L953 922L957 933M963 924L973 924M1028 922L1033 937L1038 958M1057 927L1062 943L1065 953M1073 933L1082 938M1092 920L1103 933M1113 926L1120 933M1124 930L1129 932M1140 922L1147 927M1152 918L1163 928M1173 916L1185 930M1188 926L1197 935L1205 940M1258 925L1267 933M1275 924L1283 922M1480 907L1485 923L1493 927"/>
<path stroke="#0a0ab4" d="M131 927M157 925L161 918M180 933L184 930M190 937L192 933M206 958L210 953M244 963L249 945L261 930L267 923M282 968L288 968L292 952L300 952L310 945M329 983L335 970L345 975L351 968M363 980L369 938M388 957L398 958L412 959L429 947M438 968L443 953M449 962L453 953L465 937L476 930M518 967L524 952L539 933M547 927L551 923M569 930L572 925M596 977L600 983L607 947L613 940M627 945L632 947L637 927M650 953L657 937L660 927M768 927L773 923L777 913M805 928L810 923M957 933L963 924M1038 958L1048 937L1057 927M1065 953L1073 933M1103 933L1113 926M1120 933L1124 930M1129 932L1137 923M1163 928L1168 927M1185 930L1188 926M1205 940L1215 937L1220 947M1227 977L1240 953L1248 930L1258 925M1267 933L1275 924"/>
<path stroke="#8c0c0c" d="M318 958L324 983L329 983M351 968L359 987L363 980M429 947L433 953L438 968M584 950L590 985L596 977M1220 947L1227 977"/>
</g>
<path fill="#a00000" d="M194 939h12l-6 11zM232 939h12l-6 11zM243 939h12l-6 11zM270 939h12l-6 11zM302 939h12l-6 11zM373 939h12l-6 11zM502 939h12l-6 11zM573 939h12l-6 11zM621 939h12l-6 11zM637 939h12l-6 11zM1027 939h12l-6 11zM1054 939h12l-6 11zM1211 939h12l-6 11z"/>
<path fill="#0000c4" d="M205 951h12l-6-11zM237 951h12l-6-11zM248 951h12l-6-11zM297 951h12l-6-11zM363 949h12l-6-11zM455 951h12l-6-11zM524 951h12l-6-11zM600 951h12l-6-11zM627 951h12l-6-11zM643 951h12l-6-11zM1037 952h12l-6-11zM1060 952h12l-6-11zM1233 951h12l-6-11z"/>

<!-- indicator legends -->
<rect x="28" y="733.500" width="15" height="14" fill="#d8e4ea" stroke="#8ba3af"/><circle cx="35" cy="740.500" r="4.500" fill="#5b7fb0"/><path d="M33 738.500l4 4m0-4l-4 4" stroke="#fff"/>
<rect x="43.500" y="733.500" width="149.500" height="14" fill="#d3e0e7" stroke="#8ba3af"/><rect x="47" y="736.500" width="8" height="8" fill="#333"/><text x="60" y="744.300" class="t" textLength="130" lengthAdjust="spacingAndGlyphs">Sistema de trenes Doc v4 (f f)</text>
<rect x="28" y="891" width="15" height="14" fill="#d8e4ea" stroke="#8ba3af"/><circle cx="35" cy="898" r="4.500" fill="#5b7fb0"/><path d="M33 896l4 4m0-4l-4 4" stroke="#fff"/>
<rect x="43.500" y="891" width="74.500" height="14.500" fill="#d3e0e7" stroke="#8ba3af"/><rect x="47" y="894" width="8" height="8" fill="#7a8a90"/><text x="59" y="902" class="t" textLength="56" lengthAdjust="spacingAndGlyphs">Willy Doc (t)</text>

<!-- axes frame -->
<rect x="1875" y="22" width="40" height="988" fill="#fff"/>
<rect x="28" y="995" width="1887" height="15" fill="#fff"/>
<path fill="none" stroke="#7a929e" stroke-width="1.500" d="M28 733H1915M28 890H1915M28 995H1875M1875 22V995"/>
<path stroke="#7a929e" d="M1875 29.500h4M1875 110h4M1875 190h4M1875 271h4M1875 351h4M1875 431h4M1875 512h4M1875 592h4M1875 672h4M1875 746h4M1875 773h4M1875 800h4M1875 814h4M1875 840h4M1875 856h4M1875 883h4M1875 899h4M1875 922h4M1875 945h4M1875 968h4M1875 991h4M75 995v3M124 995v3M172 995v3M222 995v3M264 995v3M313 995v3M362 995v3M405 995v3M453 995v3M503 995v3M551 995v3M594 995v3M643 995v3M686 995v3M735 995v3M784 995v3M832 995v3M875 995v3M924 995v3M973 995v3M1016 995v3M1066 995v3M1113 995v3M1162 995v3M1205 995v3M1254 995v3M1302 995v3M1347 995v3M1394 995v3M1443 995v3M1487 995v3M1535 995v3M1584 995v3M1633 995v3M1677 995v3M1723 995v3M1768 995v3M1816 995v3M1865 995v3"/>

<!-- right axis labels -->
<text x="1881" y="33" class="a">65.000</text><text x="1881" y="113.500" class="a">60.000</text><text x="1881" y="274.500" class="a">50.000</text><text x="1881" y="354.500" class="a">45.000</text><text x="1881" y="434.500" class="a">40.000</text><text x="1881" y="515.500" class="a">35.000</text><text x="1881" y="595.500" class="a">30.000</text><text x="1881" y="675.500" class="a">25.000</text>
<rect class="bx" x="1879.500" y="189.500" width="40" height="11"/><text x="1881" y="198.500" class="a" style="fill:#505000;stroke:#505000">54.800,0</text>
<rect class="bx" x="1879.500" y="209.500" width="40" height="11"/><text x="1881" y="218.500" class="a" style="fill:#a00000;stroke:#a00000">53.547,5</text>
<rect class="bx" x="1879.500" y="287" width="40" height="11.500"/><text x="1881" y="296" class="a" style="fill:#10108c;stroke:#10108c">48.660,9</text>
<rect class="bx" x="1880" y="738.500" width="18" height="11.500"/><text x="1881.500" y="748" class="a">100</text>
<rect class="bx" x="1880" y="749.500" width="30.500" height="11.500"/><text x="1881.500" y="759" class="a">92,645</text>
<rect class="bx" x="1880" y="763" width="30.500" height="11"/><text x="1881.500" y="772.500" class="a" style="fill:#f01010;stroke:#f01010">83,917</text>
<rect class="bx" x="1880" y="772" width="12" height="11"/><text x="1881.500" y="781.500" class="a">80</text>
<rect class="bx" x="1880" y="799.500" width="30.500" height="11"/><text x="1881.500" y="809" class="a">54,661</text>
<rect class="bx" x="1880" y="809.500" width="12" height="10"/><text x="1881.500" y="818.500" class="a" style="fill:#10108c;stroke:#10108c">50</text>
<rect class="bx" x="1880" y="819" width="30.500" height="11"/><text x="1881.500" y="828.500" class="a" style="fill:#f01030;stroke:#f01030">44,802</text>
<rect class="bx" x="1880" y="851" width="12" height="11"/><text x="1881.500" y="860.500" class="a">20</text>
<rect class="bx" x="1880" y="877" width="7" height="12"/><text x="1881.500" y="887" class="a" style="font-size:9px">0</text>
<rect class="bx" x="1880" y="893.500" width="7" height="11.500"/><text x="1881.500" y="903" class="a" style="font-size:9px">0</text>
<rect class="bx" x="1880" y="913" width="15" height="11"/><text x="1881.500" y="922.500" class="a" style="fill:#10108c;stroke:#10108c">-25</text>
<rect class="bx" x="1880" y="926" width="33" height="11"/><text x="1881.500" y="935.500" class="a" style="fill:#ff9800;stroke:#ff9800">-30,552</text>
<rect class="bx" x="1880" y="940.500" width="15" height="11"/><text x="1881.500" y="950" class="a" style="fill:#10108c;stroke:#10108c">-50</text>
<text x="1881.500" y="959" class="a">-60</text>
<rect class="bx" x="1880" y="963" width="15" height="11.500"/><text x="1881.500" y="972.500" class="a" style="fill:#e01414;stroke:#e01414">-75</text>
<rect class="bx" x="1880" y="983.500" width="20" height="11.500"/><text x="1881.500" y="993" class="a">-100</text>

<!-- x axis labels -->
<text x="75.500" y="1008" class="x">mar</text><text x="124" y="1008" class="x">may</text><text x="172" y="1008" class="x">jul</text><text x="222" y="1008" class="x">sept</text><text x="264.500" y="1008" class="x">nov</text><text x="313" y="1008" class="y">2022</text><text x="362.500" y="1008" class="x">mar</text><text x="405" y="1008" class="x">may</text><text x="453" y="1008" class="x">jul</text><text x="503" y="1008" class="x">sept</text><text x="551" y="1008" class="x">nov</text><text x="594" y="1008" class="y">2023</text><text x="643" y="1008" class="x">mar</text><text x="686" y="1008" class="x">may</text><text x="735" y="1008" class="x">jul</text><text x="784" y="1008" class="x">sept</text><text x="832" y="1008" class="x">nov</text><text x="875" y="1008" class="y">2024</text><text x="924" y="1008" class="x">mar</text><text x="973" y="1008" class="x">may</text><text x="1016" y="1008" class="x">jul</text><text x="1066" y="1008" class="x">sept</text><text x="1113" y="1008" class="x">nov</text><text x="1162" y="1008" class="y">2025</text><text x="1205" y="1008" class="x">mar</text><text x="1254" y="1008" class="x">may</text><text x="1302" y="1008" class="x">jul</text><text x="1347" y="1008" class="x">sept</text><text x="1394" y="1008" class="x">nov</text><text x="1443" y="1008" class="y">2026</text><text x="1487" y="1008" class="x">mar</text><text x="1535" y="1008" class="x">may</text><text x="1584" y="1008" class="x">jul</text><text x="1633" y="1008" class="x">sept</text><text x="1677" y="1008" class="x">nov</text><text x="1723" y="1008" class="y">2027</text><text x="1768" y="1008" class="x">mar</text><text x="1816" y="1008" class="x">may</text>

<!-- top toolbar -->
<rect x="0" y="0" width="1915" height="22" fill="url(#tb)"/>
<path stroke="#3f5a68" d="M0 .5H1915"/><path stroke="#44606e" stroke-width="1.500" d="M0 21.500H1915"/>
<path stroke="#6f8a98" d="M23.500 1V21M38.500 1V21M92.500 1V21M333.500 1V21M394.500 1V21M487.500 1V21M571.500 1V21M656.500 1V21M670.500 1V21M1850.500 1V21M1870.500 1V21"/>
<path stroke="#111" d="M7.500 8V17M12.500 6V15M17.500 4V12"/>
<path d="M6 10h3v5H6zM11 8h3v5h-3zM16 6h3v4h-3z" fill="#2fa02f" stroke="#2a6a2a" stroke-width=".6"/>
<path fill="none" stroke="#66808c" stroke-width="2" d="M28 6h5v4h-5zM28 13h5v4h-5z"/>
<text x="43" y="14" class="t">NIKKEI</text>
<path fill="none" stroke="#333" stroke-width="1.400" d="M82 9l3 3 3-3"/>
<g fill="url(#bt)" stroke="#6f8a98"><rect x="97.500" y="3.500" width="19.500" height="15" rx="3"/><rect x="121.500" y="3.500" width="24.500" height="15" rx="3"/><rect x="150.500" y="3.500" width="18.500" height="15" rx="3"/><rect x="173.500" y="3.500" width="21.500" height="15" rx="3"/><rect x="199.500" y="3.500" width="22.500" height="15" rx="3"/><rect x="226.500" y="3.500" width="17.500" height="15" rx="3"/><rect x="246.500" y="3.500" width="15.500" height="15" rx="3"/><rect x="267.500" y="3.500" width="10.500" height="15" rx="3"/><rect x="282.500" y="3.500" width="13.500" height="15" rx="3" fill="#8ea5b1"/><rect x="300.500" y="3.500" width="11.500" height="15" rx="3"/><rect x="316.500" y="3.500" width="11.500" height="15" rx="3"/><rect x="399.500" y="3.500" width="21.500" height="15" rx="3"/><rect x="425.500" y="3.500" width="26.500" height="15" rx="3" fill="#8ea5b1"/><rect x="456.500" y="3.500" width="26.500" height="15" rx="3"/></g>
<g class="t m" text-anchor="middle"><text x="107" y="14.500" class="t m" textLength="14" lengthAdjust="spacingAndGlyphs">12s</text><text x="134" y="14.500" class="t m" textLength="19" lengthAdjust="spacingAndGlyphs">144s</text><text x="159.500" y="14.500" class="t m" textLength="13" lengthAdjust="spacingAndGlyphs">1m</text><text x="184" y="14.500" class="t m" textLength="17" lengthAdjust="spacingAndGlyphs">12m</text><text x="210.500" y="14.500" class="t m" textLength="17" lengthAdjust="spacingAndGlyphs">56m</text><text x="235" y="14.500" class="t m" textLength="11" lengthAdjust="spacingAndGlyphs">1h</text><text x="254" y="14.500" class="t m" textLength="11" lengthAdjust="spacingAndGlyphs">4h</text><text x="272.500" y="14.500" class="t m">D</text><text x="289" y="14.500" class="t m">W</text><text x="306" y="14.500" class="t m">M</text><text x="322" y="14.500" class="t m">Q</text><text x="410" y="14.500" class="t m" textLength="17" lengthAdjust="spacingAndGlyphs">5kU</text><text x="438.500" y="14.500" class="t m" textLength="22" lengthAdjust="spacingAndGlyphs">10kU</text><text x="469.500" y="14.500" class="t m" textLength="22" lengthAdjust="spacingAndGlyphs">35kU</text></g>
<text x="338" y="14.500" class="t" textLength="42" lengthAdjust="spacingAndGlyphs">1 semana</text>
<path fill="none" stroke="#333" stroke-width="1.400" d="M385 9l3 3 3-3"/>
<text x="493" y="14.500" class="t" textLength="63" lengthAdjust="spacingAndGlyphs">10 k unidades</text>
<path fill="none" stroke="#333" stroke-width="1.400" d="M561 9l3 3 3-3"/>
<path fill="none" stroke="#2a9a2a" d="M578 8q3-7 6 0t7 0"/><path fill="none" stroke="#d03030" d="M578 5q4 0 6 5t7 1"/><path fill="#2a9a2a" d="M578 15h3v4h-3zM583 14h3v5h-3zM588 13h3v6h-3z"/>
<text x="598" y="14.500" class="t" textLength="54" lengthAdjust="spacingAndGlyphs">Indicadores</text>
<path fill="none" stroke="#333" stroke-width="1.400" d="M660 9l3 3 3-3"/>
<rect x="679" y="6" width="8" height="10" fill="#eef3f6" stroke="#92a8b2"/><path stroke="#555" d="M683 8v1M683 10v4"/>
<circle cx="700" cy="11" r="3.500" fill="#8b959a"/>
<rect x="709" y="4" width="38" height="13" rx="2" fill="#f0454d"/><text x="728" y="14" class="m" style="font-size:10.300px;text-anchor:middle" fill="#fff">-0,57 %</text>
<text x="751" y="14.500" style="font-size:10.300px;font-weight:bold" fill="#0a1020" textLength="53" lengthAdjust="spacingAndGlyphs">13 mar 2026</text>
<rect x="808.500" y="4.500" width="91.500" height="13" rx="4" fill="#bfd49e" stroke="#a2b884"/><text x="812" y="14.500" class="t" textLength="84" lengthAdjust="spacingAndGlyphs">Japón 225 Cash (1$)</text>
<path fill="none" stroke="#e03030" stroke-width="1.800" d="M1863 6q-6 1-5 6M1853 8l-1 4 4 0"/><path fill="none" stroke="#22a022" stroke-width="1.800" d="M1858 16q6 0 6-6M1862 8l2 2 2-2"/>
<path fill="none" stroke="#7d919c" stroke-width="1.600" d="M1875 17.500h7M1890 9h7v7h-7zM1904 7l8 9m0-9l-8 9"/>

<!-- legend bar -->
<rect x="28.500" y="23" width="422.500" height="15" fill="#d3e0e7" stroke="#8ba3af"/>
<path stroke="#8ba3af" d="M71.500 23V38M118.500 23V38M135.500 23V38M199.500 23V38M336.500 23V38"/>
<rect x="30" y="25" width="10" height="11" fill="#f3f3f3" stroke="#98a8b0"/><path fill="#e01010" d="M33 27h3v4h2l-3.500 3.500L31 31h2z"/>
<rect x="44" y="25" width="10" height="11" fill="#f3f3f3" stroke="#98a8b0"/><path fill="#20a020" d="M48 34v-4h-2l3.500-3.500L53 30h-2v4z"/>
<circle cx="63" cy="30.500" r="5" fill="#5b7fb0"/><path d="M61 28.500l4 4m0-4l-4 4" stroke="#fff"/>
<rect x="76.500" y="26.500" width="7" height="8" fill="#e9eef0" stroke="#8a9aa2"/>
<text x="87" y="34" class="t" textLength="29" lengthAdjust="spacingAndGlyphs">Precio</text>
<path stroke="#333" d="M123 27h1M126 27h6M123 30h1M126 30h6M123 33h1M126 33h6"/>
<rect x="139.500" y="26.500" width="7" height="8" fill="#e9eef0" stroke="#8a9aa2"/>
<text x="151" y="34" class="t" textLength="45" lengthAdjust="spacingAndGlyphs">Cierre (W)</text>
<rect x="203" y="26" width="8" height="9" fill="#707f88"/>
<text x="215" y="34" class="t" textLength="119" lengthAdjust="spacingAndGlyphs">Tunel Domenec v4 (t t t t t)</text>
<path d="M340 26h2v9h-2z" fill="#e02020"/><path d="M342 26h2v9h-2z" fill="#20a020"/><path d="M344 26h2v9h-2z" fill="#e0c020"/><path d="M346 26h1.500v9H346z" fill="#2030c0"/>
<text x="352" y="34" class="t" textLength="97" lengthAdjust="spacingAndGlyphs">Control Total Doc v.6</text>

<!-- left toolbar -->
<rect x="0" y="22" width="27.500" height="1008" fill="#9ab7c6"/>
<path stroke="#6f8a98" stroke-width="1.300" d="M27.500 22V1030"/>
<path fill="none" stroke="#66808c" stroke-width="1.300" d="M11 28l3-3 3 3"/>
<rect x="3.500" y="34.500" width="21" height="21" rx="2" fill="#8aa3b1" stroke="#6f8a98"/>
<path d="M11 38v14l3-3 3 6 2-1-3-6 4-1z" fill="#e6ecef" stroke="#5a6c76"/>
<g fill="none" stroke-width="1.500">
<circle cx="13" cy="65" r="4.500" stroke="#222" fill="#cfe2ea"/><path stroke="#222" stroke-width="2" d="M16 69l5 5"/>
<rect x="6.500" y="87.500" width="10" height="7" stroke="#2a5ae0" stroke-dasharray="2 1.500" stroke-width="1"/><circle cx="15" cy="86" r="4" stroke="#222" fill="#cfe2ea"/><path stroke="#222" stroke-width="2" d="M18 89l4 4"/>
<path stroke="#111" d="M5 108h14"/><path fill="#f0e030" stroke="#7a6a10" stroke-width="1" d="M11 108q0 7-3 9h10q-3-2-3-9zM13 117v2"/><path stroke="#2a5ae0" d="M16 106l3 3m0-3l-3 3"/><path fill="#fff" stroke="#555" stroke-width=".7" d="M18 110v7l2-2 1 3 1-.5-1-3 2-.5z"/>
<path fill="#f0e030" stroke="#7a6a10" stroke-width="1" d="M13.500 129q-3 0-3 5 0 3-3 5h12q-3-2-3-5 0-5-3-5zM13.500 139v2"/><path stroke="#5a6c76" stroke-width="1" d="M7 129l-2 2M20 129l2 2"/>
<path stroke="#2a5ae0" d="M6 162l3-8 3 8h5"/><path stroke="#e87040" stroke-dasharray="2 1" stroke-width="1" d="M6 159h16"/>
<path stroke="#e87040" stroke-dasharray="2 1" stroke-width="1" d="M8 177h14M8 180h14"/>
<path stroke="#2a5ae0" stroke-width="1" fill="#b5d0dc" d="M8 196h12v8H8z"/><path stroke="#2a5ae0" stroke-width="1" d="M19 194v4M17 196h4M6 203v4M4 205h4"/>
<path stroke="#e01a1a" fill="#c9a0a8" d="M8 216h12v9H8z"/><path stroke="#2a5ae0" stroke-width="1" d="M19 214v4M17 216h4M6 224v4M4 226h4"/>
<circle cx="8" cy="249" r="2" stroke="#111" stroke-width="1"/><path stroke="#111" stroke-width="2" d="M10 247l9-9"/><path fill="#111" stroke="none" d="M21 236l-6 1 5 5z"/>
<rect x="7.500" y="260.500" width="13" height="12" rx="2" fill="#cfe0f2" stroke="#5a8ad8" stroke-width="1"/>
<ellipse cx="14" cy="288" rx="7.500" ry="7" stroke="#5a8ad8" fill="#cfe0f2" stroke-width="1"/>
<circle cx="9" cy="316" r="2" stroke="#222" stroke-width="1"/><circle cx="19" cy="306" r="2" stroke="#222" stroke-width="1"/><path stroke="#222" stroke-width="1.200" d="M10.500 314.500l7-7"/>
<circle cx="12.500" cy="332" r="1.800" stroke="#60e060" stroke-width="1"/><path stroke="#60f060" stroke-width="2" d="M14 332h9"/>
<circle cx="12.500" cy="354" r="1.800" stroke="#2fb02f" stroke-width="1"/><path stroke="#2fb02f" stroke-width="2" d="M14 354h9"/>
<circle cx="12.500" cy="376" r="1.800" stroke="#0a700a" stroke-width="1"/><path stroke="#0a700a" stroke-width="2" d="M14 376h9"/>
<circle cx="12.500" cy="398" r="1.800" stroke="#e01a1a" stroke-width="1"/><path stroke="#e01a1a" stroke-width="2" d="M14 398h9"/>
<path stroke="#5c6c74" stroke-width="1" fill="#c0cdd4" d="M6 425l15-12 3 4-15 12z"/>
<path stroke="#8a9aa2" stroke-width="5" d="M6 440h16"/><path stroke="#5aa05a" stroke-dasharray="1 1" d="M6 435h16"/><path stroke="#c09ac0" stroke-width="6" d="M6 447h16"/><path stroke="#5a7ad8" stroke-width="1" d="M6 445l4-3 4 3 8-6"/>
<ellipse cx="14" cy="464" rx="7.500" ry="4.500" stroke="#e02020" fill="#b9a0a8"/><path stroke="#2a5ae0" stroke-width="1" d="M21 458v4M19 460h4M6 468v4M4 470h4"/>
<ellipse cx="14" cy="487" rx="7.500" ry="4.500" stroke="#8a5a20" fill="#a8a8a0"/><path stroke="#2a5ae0" stroke-width="1" d="M21 481v4M19 483h4M6 491v4M4 493h4"/>
<ellipse cx="14" cy="509" rx="7.500" ry="4.500" stroke="#1a8a1a" fill="#8ab08a"/><path stroke="#2a5ae0" stroke-width="1" d="M21 503v4M19 505h4M6 513v4M4 515h4"/>
<ellipse cx="14" cy="531" rx="7.500" ry="4.500" stroke="#10e010" fill="#a8c8a8"/><path stroke="#2a5ae0" stroke-width="1" d="M21 525v4M19 527h4M6 535v4M4 537h4"/>
<path stroke="#222" stroke-width="1" d="M5 565l18-14"/><path stroke="#2fb02f" stroke-width="1.200" d="M5 592l18-24"/><path stroke="#e01a1a" stroke-width="1.200" d="M5 614l18-24"/>
<path stroke="#111" stroke-width="1.200" d="M5 618.500h18"/><path stroke="#f09080" stroke-width="2" d="M5 640h18"/><path stroke="#10ee10" stroke-width="2" d="M5 662h18"/><path stroke="#0a800a" stroke-width="2" d="M5 684h18"/><path stroke="#ee1010" stroke-width="2" d="M5 706h18"/><path stroke="#6a9af0" stroke-width="2" d="M5 728h18"/><path stroke="#10108c" stroke-width="2" d="M5 750h18"/>
<path stroke="#111" stroke-width="1.300" d="M14.500 763v18"/>
<path stroke="#e03a3a" stroke-width="1.100" d="M6 797h15M6 797l12-11"/><path stroke="#2a5ae0" stroke-width="1" d="M13 793l1-4 3 2"/>
<circle cx="13.500" cy="815" r="6" stroke="#e88030" stroke-width="1.300"/><path stroke="#2a5ae0" stroke-width="1" d="M13.500 812v6M10.500 815h6M19 807v4M17 809h4"/>
<path stroke="#2a5ae0" stroke-width=".8" d="M6 846l5-14M10 846l6-12M6 868l6-10M10 872l8-14"/>
</g>
<text x="10" y="835" style="font-size:7px;font-weight:bold" fill="#2a4ae0">3+5+</text><text x="14" y="841" style="font-size:7px;font-weight:bold" fill="#2a4ae0">+4</text><text x="11" y="847" style="font-size:7px;font-weight:bold" fill="#2a4ae0">+2</text>
<text x="14" y="858" style="font-size:8px;font-weight:bold" fill="#2a4ae0">+b</text><text x="5" y="864" style="font-size:7px;font-weight:bold" fill="#2a4ae0">a+</text><text x="15" y="868" style="font-size:7px;font-weight:bold" fill="#2a4ae0">c+</text>
<path fill="#46b24a" stroke="#2c8a30" stroke-width=".8" d="M7 881l3-2 3 4 8-10 1 2-8 14h-2z"/>
<path fill="#4db24a" stroke="#2c8a30" stroke-width=".7" d="M6 905h4v9H6zM11 905l3-8 2 .5v5h6l-1.500 11.500H11z"/>
<path stroke="#e01010" stroke-width="4" d="M8 921l13 13m0-13l-13 13"/>
<rect x="0" y="945" width="27" height="10" fill="#c3d8e2" stroke="#7d97a4"/><path fill="none" stroke="#333" stroke-width="1.400" d="M11 948l3 3 3-3"/>
<path fill="#e8ecee" stroke="#5a6c76" d="M9 963h11v13H9z"/><circle cx="10" cy="964" r="3.500" fill="#2a9a2a"/><path stroke="#333" d="M12 968h7M12 971h7M12 974h5"/><path stroke="#333" stroke-width="1.500" d="M15 977l6-5"/>
<path stroke="#222" stroke-width="1.800" stroke-dasharray="1.500 1.500" d="M7 996h13"/><path stroke="#222" fill="#222" d="M15 1000h5l-2.500 3z"/>

<!-- bottom bar -->
<rect x="0" y="1010" width="1915" height="20" fill="#9ab7c6"/>
<path stroke="#6f8a98" stroke-width="1.300" d="M0 1010.500H1915M27.500 1010V1030"/>
<path fill="#d9a62c" stroke="#5a4a20" stroke-width=".7" d="M11 1027l2-11 2 1-2 10zM16 1027l1-14 2 1-1 13z"/><path stroke="#1a7a1a" fill="none" d="M7 1026l3-10 3 6"/>
<path stroke="#eef3f6" stroke-width="1.500" d="M33 1021l7-5M33 1021l7 5"/><circle cx="33" cy="1021" r="2" fill="#eef3f6"/><circle cx="40" cy="1016" r="2" fill="#eef3f6"/><circle cx="40" cy="1026" r="2" fill="#eef3f6"/>
<rect x="53" y="1015" width="7" height="10" fill="#e8ecee" stroke="#7a8a92"/><rect x="57" y="1018" width="8" height="8" fill="#3a7ad8"/>
<rect x="76" y="1014" width="9" height="13" fill="#e8ecee" stroke="#5a6c76"/><path stroke="#d04040" d="M78 1018h5M78 1021h5M78 1024h5"/>
<path fill="#2a9a2a" d="M95 1016h10v3H95zM95 1024h10v3H95z"/><path fill="#d03030" d="M98 1014h3v14h-3z"/>
<rect x="115" y="1014" width="8" height="8" fill="#e8ecee" stroke="#3a7ad8"/><rect x="119" y="1019" width="9" height="8" fill="#e8ecee" stroke="#3a7ad8"/><path stroke="#2a9a2a" fill="none" d="M120 1025l2-3 2 2 2-3"/>
<text x="135" y="1025" style="font-size:12px" fill="#5c6e78">«</text>
<rect x="148.500" y="1014.500" width="1604" height="11.500" fill="#9ab7c6" stroke="#748d9a"/>
<rect x="1513" y="1015" width="239" height="11" fill="url(#sb)"/>
<rect x="148.500" y="1014.500" width="11" height="11.500" fill="#d6e3e9" stroke="#748d9a"/><path fill="none" stroke="#333" stroke-width="1.200" d="M155.500 1018l-2.500 2.500 2.500 2.500"/>
<rect x="1752.500" y="1014.500" width="11" height="11.500" fill="#d6e3e9" stroke="#748d9a"/><path fill="none" stroke="#333" stroke-width="1.200" d="M1757 1018l2.500 2.500-2.500 2.500"/>
<g fill="none">
<path stroke="#2a6ae0" stroke-width="2.400" d="M1775 1018h6q4 1 4 4t-3 5"/><path fill="#2a6ae0" d="M1773 1018l5-4v8z"/>
<path stroke="#8ab4e8" stroke-width="2.400" d="M1807 1018h-6q-4 1-4 4t3 5"/><path fill="#8ab4e8" d="M1809 1018l-5-4v8z"/>
<rect x="1816" y="1018" width="5" height="8" fill="#d03030"/><rect x="1822" y="1016" width="5" height="10" fill="#2a9a2a"/><path stroke="#fff" stroke-width="1.600" d="M1820 1027l6-9"/>
<circle cx="1843" cy="1019" r="4.500" fill="#e8f0f4" stroke="#111" stroke-width="1.600"/><path stroke="#111" stroke-width="2.200" d="M1846 1023l3 3"/><path stroke="#2a4ae0" d="M1838 1027h8M1851 1014v9"/>
<circle cx="1865" cy="1019" r="4.500" fill="#e8f0f4" stroke="#111" stroke-width="1.600"/><path stroke="#111" stroke-width="2.200" d="M1868 1023l4 4"/><path stroke="#2a4ae0" stroke-width="1.400" d="M1862.500 1019h5"/>
<circle cx="1886" cy="1019" r="4.500" fill="#e8f0f4" stroke="#111" stroke-width="1.600"/><path stroke="#111" stroke-width="2.200" d="M1889 1023l4 4"/><path stroke="#2a4ae0" stroke-width="1.400" d="M1883.500 1019h5M1886 1016.500v5"/>
<path stroke="#222" stroke-width="1.800" stroke-dasharray="1.500 1.500" d="M1903 1018h12"/><path fill="#2a6ae0" d="M1906 1024h5l-2.500 4z"/><path stroke="#2a6ae0" d="M1908.500 1020v5"/>
</g>
<text x="18" y="165" style="font-size:11px;font-weight:bold" fill="#1a4ae0">F</text>
<text x="18" y="186" style="font-size:11px;font-weight:bold" fill="#1a4ae0">F</text>
<text x="14" y="271" style="font-size:11px;font-weight:bold;text-anchor:middle" fill="#111">T</text>
<text x="14" y="292" style="font-size:11px;font-weight:bold;text-anchor:middle" fill="#0a7a0a">T</text>
</svg>
</body></html>
